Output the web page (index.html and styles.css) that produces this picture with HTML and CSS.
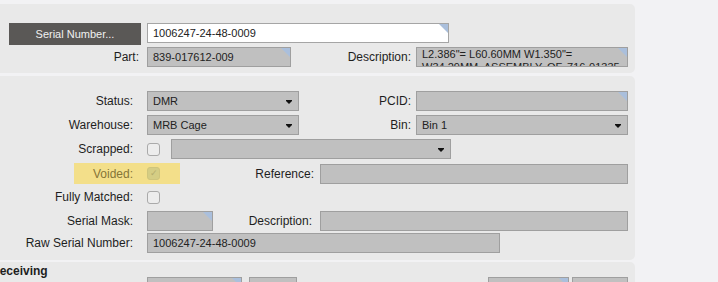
FILE: index.html
```html
<!DOCTYPE html>
<html lang="en">
<head>
    <meta charset="UTF-8">
    <title>Serial Number Maintenance</title>
    <link rel="stylesheet" href="styles.css">
</head>
<body>
    <div class="page">
        <!-- header: serial lookup -->
        <div class="panel panel-top">
            <div class="row row-serial">
                <div class="btn-dark">Serial Number...</div>
                <div class="field field-white corner w-serial">1006247-24-48-0009</div>
            </div>
            <div class="row">
                <div class="lbl lbl-top">Part:</div>
                <div class="field corner w-part">839-017612-009</div>
                <div class="lbl lbl-desc">Description:</div>
                <div class="field corner field-multi w-wide">L2.386"= L60.60MM W1.350"=<br>W34.29MM, ASSEMBLY, OF, 716-01335</div>
            </div>
        </div>

        <!-- details -->
        <div class="panel panel-mid">
            <div class="row">
                <div class="lbl">Status:</div>
                <div class="field select w-select">DMR</div>
                <div class="lbl lbl-pcid">PCID:</div>
                <div class="field corner w-wide"></div>
            </div>
            <div class="row">
                <div class="lbl">Warehouse:</div>
                <div class="field select w-select">MRB Cage</div>
                <div class="lbl lbl-pcid">Bin:</div>
                <div class="field select w-wide">Bin 1</div>
            </div>
            <div class="row">
                <div class="lbl">Scrapped:</div>
                <div class="check"></div>
                <div class="field select w-scrap"></div>
            </div>
            <div class="row row-voided">
                <div class="highlight">
                    <div class="lbl lbl-voided">Voided:</div>
                    <div class="check checked">&#10003;</div>
                </div>
                <div class="lbl lbl-ref">Reference:</div>
                <div class="field w-long"></div>
            </div>
            <div class="row">
                <div class="lbl">Fully Matched:</div>
                <div class="check"></div>
            </div>
            <div class="row">
                <div class="lbl">Serial Mask:</div>
                <div class="field corner w-mask"></div>
                <div class="lbl lbl-desc2">Description:</div>
                <div class="field w-long"></div>
            </div>
            <div class="row row-raw">
                <div class="lbl">Raw Serial Number:</div>
                <div class="field w-raw">1006247-24-48-0009</div>
            </div>
        </div>

        <!-- receiving -->
        <div class="panel panel-bottom">
            <div class="section-title">Receiving</div>
            <div class="row">
                <div class="field corner w-recv1"></div>
                <div class="field w-recv2"></div>
                <div class="field corner w-recv3"></div>
                <div class="field w-recv4"></div>
            </div>
        </div>
    </div>
</body>
</html>
```

FILE: styles.css
```css
* {
    margin: 0;
    padding: 0;
    box-sizing: border-box;
}

body {
    font-family: 'Liberation Sans', Arial, sans-serif;
    font-size: 12px;
    color: #1e1e1e;
    background: #f2f2f4;
    overflow: hidden;
}

.page {
    width: 649px;
    margin-left: -14px;
    padding-top: 4px;
}

.panel {
    background: #e9e9e9;
    border-radius: 5px;
    padding-left: 23px;
    padding-right: 7px;
}

.panel-top {
    padding-top: 19px;
    padding-bottom: 6px;
    margin-bottom: 3px;
}

.panel-mid {
    padding-top: 15px;
    padding-bottom: 7px;
    margin-bottom: 2px;
}

.panel-bottom {
    padding-top: 3px;
    height: 40px;
}

.row {
    display: flex;
    align-items: center;
    height: 20px;
    margin-bottom: 4px;
}

.panel .row:last-child {
    margin-bottom: 0;
}

.row-serial {
    align-items: flex-start;
    height: 22px;
    margin-bottom: 2px;
}

.row-voided {
    height: 21px;
    margin-bottom: 3px;
}

.row-raw {
    margin-top: -2px;
}

.btn-dark {
    width: 132px;
    height: 22px;
    margin-right: 6px;
    background: #5a5856;
    color: #f0f0f0;
    font-size: 11px;
    line-height: 22px;
    text-align: center;
}

.lbl {
    width: 124px;
    margin-right: 14px;
    text-align: right;
    white-space: nowrap;
}

.lbl-top {
    width: 130px;
    margin-right: 8px;
}

.lbl-desc {
    width: 120px;
    margin-right: 5px;
}

.lbl-pcid {
    width: 112px;
    margin-right: 5px;
}

.lbl-ref {
    width: 134px;
    margin-right: 6px;
}

.lbl-desc2 {
    width: 99px;
    margin-right: 8px;
}

.field {
    position: relative;
    height: 20px;
    background: #c0c0c0;
    border: 1px solid #9f9f9f;
    color: #222;
    font-size: 11px;
    line-height: 18px;
    padding-left: 5px;
    overflow: hidden;
    white-space: nowrap;
    flex-shrink: 0;
}

.field-white {
    background: #fff;
    border-color: #a5a5a5;
}

.field-multi {
    line-height: 13px;
    padding-top: 0;
}

/* blue corner marker */
.corner::after {
    content: "";
    position: absolute;
    top: 0;
    right: 0;
    border-top: 9px solid #aabfdc;
    border-left: 9px solid transparent;
}

/* dropdown arrow */
.select::after {
    content: "";
    position: absolute;
    top: 8px;
    right: 6px;
    width: 6px;
    border-top: 1px solid #111;
}

.select::before {
    content: "";
    position: absolute;
    top: 9px;
    right: 6px;
    border-top: 3px solid #111;
    border-left: 3px solid transparent;
    border-right: 3px solid transparent;
}

.w-serial { width: 302px; }
.w-part { width: 144px; }
.w-wide { width: 212px; }
.w-select { width: 152px; }
.w-scrap { width: 280px; margin-left: 11px; }
.w-long { width: 308px; }
.w-mask { width: 66px; }
.w-raw { width: 353px; }

.check {
    width: 13px;
    height: 13px;
    border: 1px solid #aaa;
    border-radius: 3px;
    background: #ededed;
    flex-shrink: 0;
}

.check.checked {
    background: #d5cd84;
    border-color: #cfc57c;
    color: #b4ac6c;
    font-size: 9px;
    line-height: 11px;
    text-align: center;
}

.highlight {
    display: flex;
    align-items: center;
    width: 106px;
    height: 21px;
    margin-left: 65px;
    background: #f3df8a;
}

.lbl-voided {
    width: 59px;
    color: #857538;
}

.section-title {
    font-weight: bold;
    height: 12px;
    line-height: 12px;
    margin-left: -23px;
    padding-left: 5px;
}

.panel-bottom .row {
    padding-left: 138px;
}

.w-recv1 { width: 95px; }
.w-recv2 { width: 48px; margin-left: 7px; }
.w-recv3 { width: 81px; margin-left: 191px; }
.w-recv4 { width: 56px; margin-left: 3px; }
```
